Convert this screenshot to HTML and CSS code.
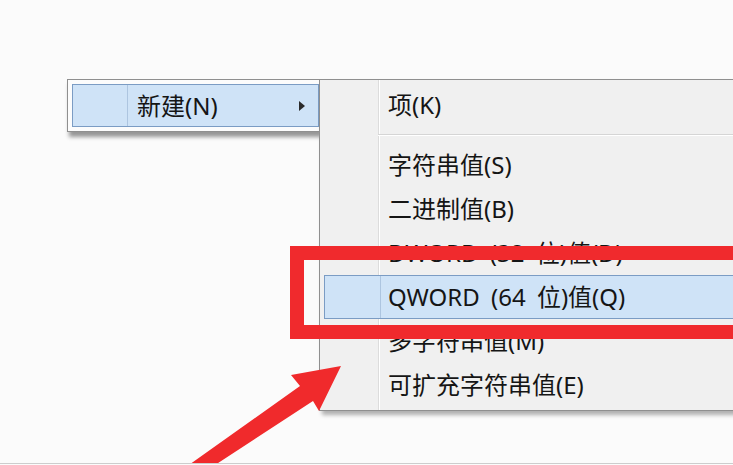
FILE: index.html
```html
<!DOCTYPE html>
<html lang="zh-CN">
<head>
<meta charset="utf-8">
<title>新建 菜单</title>
<link rel="stylesheet" href="styles.css">
</head>
<body>
<div class="desk">
  <div class="menu menu-main">
    <div class="item item-main hl">
      <span class="label">新建(N)</span>
      <span class="sub-arrow"></span>
    </div>
  </div>
  <div class="menu menu-sub">
    <div class="item"><span class="label">项(K)</span></div>
    <div class="sep"></div>
    <div class="item"><span class="label">字符串值(S)</span></div>
    <div class="item"><span class="label">二进制值(B)</span></div>
    <div class="item"><span class="label">DWORD (32 位)值(D)</span></div>
    <div class="item hl"><span class="label">QWORD (64 位)值(Q)</span></div>
    <div class="item"><span class="label">多字符串值(M)</span></div>
    <div class="item"><span class="label">可扩充字符串值(E)</span></div>
  </div>
  <div class="callout"></div>
  <svg class="pointer" width="733" height="465" viewBox="0 0 733 465" aria-hidden="true">
    <polygon points="341,366 291,375 300,386 186,467 212,467 313,401 319,411" fill="#f02a2c"/>
  </svg>
</div>
</body>
</html>
```

FILE: styles.css
```css
html, body {
  margin: 0;
  padding: 0;
  height: 100%;
  overflow: hidden;
  background: #fbfbfb;
}

.desk {
  position: relative;
  width: 733px;
  height: 463px;
  border-bottom: 1px solid #cdcdcd;
  overflow: hidden;
  font-family: "Noto Sans", "Noto Sans CJK SC", sans-serif;
  font-size: 24px;
  color: #151515;
}

.menu {
  position: absolute;
  box-sizing: border-box;
  border: 1px solid #8f8f8f;
  display: flex;
  flex-direction: column;
}

.menu-main {
  left: 67px;
  top: 79px;
  width: 253px;
  padding: 4px 0 4px 4px;
  background: #fcfcfc;
  box-shadow: 2px 5px 4px rgba(0, 0, 0, 0.4);
  z-index: 1;
}

.menu-sub {
  left: 319px;
  top: 79px;
  width: 440px;
  padding: 3px 0 3px 4px;
  background:
    linear-gradient(to right, transparent 58px, #dcdcdc 58px, #dcdcdc 59px, #ffffff 59px, #ffffff 60px, transparent 60px),
    #f0f0f0;
  box-shadow: 3px 4px 4px rgba(0, 0, 0, 0.3);
  z-index: 2;
}

.item {
  position: relative;
  display: flex;
  align-items: center;
  box-sizing: border-box;
  height: 44px;
  padding-left: 63px;
  border: 1px solid transparent;
  white-space: nowrap;
  word-spacing: 5px;
}

.item-main {
  height: 43px;
  padding-left: 64px;
}

.label {
  line-height: 1;
}

.hl {
  background: #cfe3f7;
  border-color: #7b9cc4;
}

.hl::before {
  content: "";
  position: absolute;
  left: 54px;
  top: 0;
  bottom: 0;
  width: 1px;
  background: rgba(110, 140, 180, 0.35);
}

.menu-sub .hl::before {
  left: 55px;
}

.sub-arrow {
  margin-left: auto;
  margin-right: 13px;
  width: 0;
  height: 0;
  border-left: 6px solid #2b2b2b;
  border-top: 5px solid transparent;
  border-bottom: 5px solid transparent;
}

.sep {
  height: 16px;
  margin-left: 54px;
  background: linear-gradient(to bottom, transparent 7px, #d5d5d5 7px, #d5d5d5 8px, #ffffff 8px, #ffffff 9px, transparent 9px);
}

.callout {
  position: absolute;
  left: 290px;
  top: 246px;
  width: 600px;
  height: 93px;
  box-sizing: border-box;
  border: 14px solid #f02a2d;
  z-index: 3;
}

.pointer {
  position: absolute;
  left: 0;
  top: 0;
  z-index: 4;
}
```
